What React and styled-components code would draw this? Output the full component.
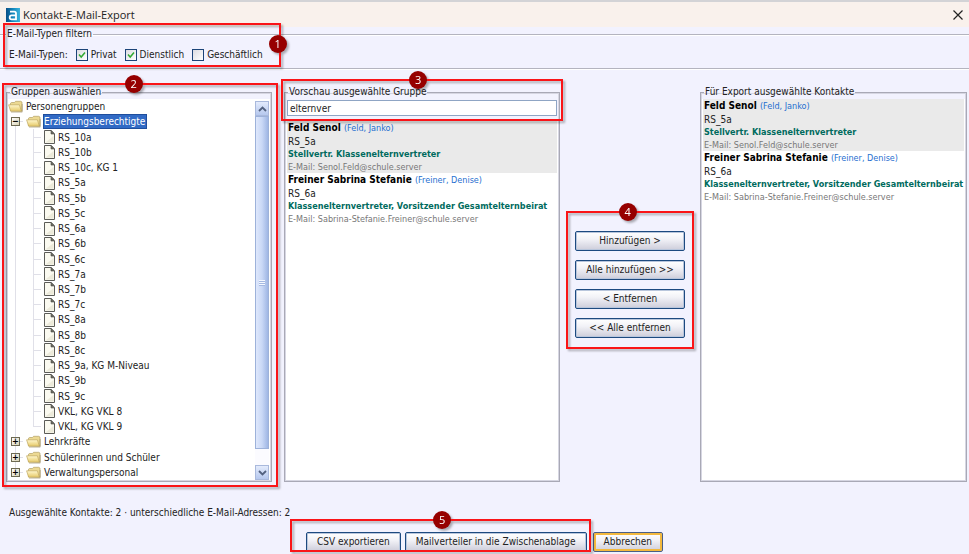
import React, { useState } from 'react';
import styled, { createGlobalStyle } from 'styled-components';

const CLASSES = [
  'RS_10a', 'RS_10b', 'RS_10c, KG 1', 'RS_5a', 'RS_5b', 'RS_5c', 'RS_6a', 'RS_6b', 'RS_6c', 'RS_7a',
  'RS_7b', 'RS_7c', 'RS_8a', 'RS_8b', 'RS_8c', 'RS_9a, KG M-Niveau', 'RS_9b', 'RS_9c', 'VKL, KG VKL 8', 'VKL, KG VKL 9',
];

const CLOSED_GROUPS = ['Lehrkräfte', 'Schülerinnen und Schüler', 'Verwaltungspersonal'];

const CONTACTS = [
  {
    name: 'Feld Senol',
    child: '(Feld, Janko)',
    group: 'RS_5a',
    role: 'Stellvertr. Klassenelternvertreter',
    mail: 'Senol.Feld@schule.server',
  },
  {
    name: 'Freiner Sabrina Stefanie',
    child: '(Freiner, Denise)',
    group: 'RS_6a',
    role: 'Klassenelternvertreter, Vorsitzender Gesamtelternbeirat',
    mail: 'Sabrina-Stefanie.Freiner@schule.server',
  },
];

function FolderIcon() {
  return (
    <svg width="15" height="13" viewBox="0 0 15 13" aria-hidden="true">
      <defs>
        <linearGradient id="folder" x1="0" y1="0" x2="0" y2="1">
          <stop offset="0" stopColor="#fff8cf" />
          <stop offset="1" stopColor="#e6c968" />
        </linearGradient>
      </defs>
      <path d="M2.500 10.500V3.200l1-.7h3l1-1.200h5.200l1.300.8v9z" fill="#ecd992" stroke="#b3a067" strokeWidth=".7" />
      <path d="M.6 4.800h10.800l2 6.400H2.600z" fill="url(#folder)" stroke="#bfa65c" strokeWidth=".7" strokeLinejoin="round" />
      <path d="M3 12.100h11.200V4" fill="none" stroke="#8a7a4c" strokeWidth=".7" opacity=".7" />
    </svg>
  );
}

function FileIcon() {
  return (
    <svg width="11" height="14" viewBox="0 0 11 14" aria-hidden="true">
      <path d="M.5.5h6.700l3.300 3.300v9.700H.5z" fill="#fbfaf0" stroke="#5c5c58" />
      <path d="M7 .6v3.400h3.400z" fill="#6b6b60" stroke="#4c4c48" strokeWidth=".6" />
      <path d="M1.400 12.400 9.600 6v6.400z" fill="#eceada" />
    </svg>
  );
}

function AppIcon() {
  return (
    <svg width="14" height="14" viewBox="0 0 14 14" aria-hidden="true">
      <defs>
        <linearGradient id="app" x1="0" x2="1">
          <stop offset="0" stopColor="#0b4f86" />
          <stop offset=".5" stopColor="#1488bd" />
          <stop offset="1" stopColor="#3cb4dc" />
        </linearGradient>
      </defs>
      <path d="M0 0h14v14H0z" fill="url(#app)" />
      <path d="M4 3.600h4.200q1.800 0 1.800 1.800v6H5.600q-1.900 0-1.900-2 0-2 1.900-2H10" fill="none" stroke="#fff" strokeWidth="1.800" />
    </svg>
  );
}

function Marker({ number, badgeX, badgeY = '0%', top, right, bottom, left }) {
  return (
    <MarkerFrame $top={top} $right={right} $bottom={bottom} $left={left}>
      <Badge $x={badgeX} $y={badgeY}>{number}</Badge>
    </MarkerFrame>
  );
}

function GroupTree() {
  return (
    <TreeArea>
      <Tree>
        <Row><FolderIcon /><Label>Personengruppen</Label></Row>
        <Row>
          <Slot $line="down" $stub><Toggle type="button" aria-label="Zuklappen">−</Toggle></Slot>
          <FolderIcon />
          <Label $selected>Erziehungsberechtigte</Label>
        </Row>
        {CLASSES.map((name, i) => (
          <Row key={name}>
            <Slot $line="full" />
            <Slot $line={i === CLASSES.length - 1 ? 'up' : 'full'} $stub />
            <FileIcon />
            <Label>{name}</Label>
          </Row>
        ))}
        {CLOSED_GROUPS.map((name, i) => (
          <Row key={name}>
            <Slot $line={i === CLOSED_GROUPS.length - 1 ? 'up' : 'full'} $stub>
              <Toggle type="button" aria-label="Aufklappen">+</Toggle>
            </Slot>
            <FolderIcon />
            <Label>{name}</Label>
          </Row>
        ))}
      </Tree>
      <ScrollBar>
        <ScrollButton type="button" aria-label="Nach oben">
          <svg width="9" height="6" viewBox="0 0 9 6"><path d="M1 5l3.500-3.500L8 5" fill="none" stroke="#52617f" strokeWidth="1.800" /></svg>
        </ScrollButton>
        <ScrollThumb><Grip /></ScrollThumb>
        <ScrollButton type="button" aria-label="Nach unten">
          <svg width="9" height="6" viewBox="0 0 9 6"><path d="M1 1l3.500 3.500L8 1" fill="none" stroke="#52617f" strokeWidth="1.800" /></svg>
        </ScrollButton>
      </ScrollBar>
    </TreeArea>
  );
}

function ContactList() {
  return (
    <Contacts>
      {CONTACTS.map((contact) => (
        <Contact key={contact.name}>
          <NameLine>{contact.name} <Child>{contact.child}</Child></NameLine>
          <GroupLine>{contact.group}</GroupLine>
          <RoleLine>{contact.role}</RoleLine>
          <MailLine>E-Mail: {contact.mail}</MailLine>
        </Contact>
      ))}
    </Contacts>
  );
}

export default function App() {
  const [types, setTypes] = useState({ Privat: true, Dienstlich: true, Geschäftlich: false });
  const [search, setSearch] = useState('elternver');

  return (
    <>
      <GlobalStyle />
      <Window>
        <TitleBar>
          <AppIcon />
          <Title>Kontakt-E-Mail-Export</Title>
          <CloseButton type="button" aria-label="Schließen">
            <svg width="10" height="10" viewBox="0 0 10 10"><path d="M.5.5l9 9M9.500.5l-9 9" stroke="#222" strokeWidth="1.200" /></svg>
          </CloseButton>
        </TitleBar>

        <FilterBox>
          <Legend>E-Mail-Typen filtern</Legend>
          <FilterRow>
            <FilterTitle>E-Mail-Typen:</FilterTitle>
            {Object.keys(types).map((type) => (
              <CheckLabel key={type}>
                <CheckBox
                  type="checkbox"
                  checked={types[type]}
                  onChange={() => setTypes({ ...types, [type]: !types[type] })}
                />
                {type}
              </CheckLabel>
            ))}
            <Marker number={1} badgeX="100%" badgeY="50%" top={-18} right={-16} bottom={1} left={-6} />
          </FilterRow>
        </FilterBox>

        <Columns>
          <Panel>
            <Legend>Gruppen auswählen</Legend>
            <GroupTree />
            <Marker number={2} badgeX="48%" top={-16} right={-7} bottom={-6} left={-5} />
          </Panel>

          <Panel>
            <Legend>Vorschau ausgewählte Gruppe</Legend>
            <SearchRow>
              <SearchInput
                aria-label="Vorschau durchsuchen"
                value={search}
                onChange={(e) => setSearch(e.target.value)}
              />
              <Marker number={3} badgeX="49%" top={-20} right={-5} bottom={0} left={-5} />
            </SearchRow>
            <ContactList />
          </Panel>

          <Transfer>
            <Button type="button">Hinzufügen &gt;</Button>
            <Button type="button">Alle hinzufügen &gt;&gt;</Button>
            <Button type="button">&lt; Entfernen</Button>
            <Button type="button">&lt;&lt; Alle entfernen</Button>
            <Marker number={4} badgeX="49%" top={-20} right={-6} bottom={-11} left={-6} />
          </Transfer>

          <Panel>
            <Legend>Für Export ausgewählte Kontakte</Legend>
            <ContactList />
          </Panel>
        </Columns>

        <Status>Ausgewählte Kontakte: 2 · unterschiedliche E-Mail-Adressen: 2</Status>

        <Footer>
          <ExportButtons>
            <Button type="button">CSV exportieren</Button>
            <Button type="button">Mailverteiler in die Zwischenablage</Button>
            <Marker number={5} badgeX="51%" top={-13} right={-4} bottom={0} left={-16} />
          </ExportButtons>
          <Button type="button" $focused>Abbrechen</Button>
        </Footer>
      </Window>
    </>
  );
}

const GlobalStyle = createGlobalStyle`
  * {
    box-sizing: border-box;
  }

  body {
    margin: 0;
    background-color: #f2f2fe;
  }

  button, input {
    font: inherit;
    color: inherit;
  }
`;

const Window = styled.main`
  display: flex;
  flex-direction: column;
  min-height: 100vh;
  border-top: 2px solid #d3d3d6;
  background-color: #f2f2fe;
  color: #222;
  font-family: 'DejaVu Sans Condensed', 'DejaVu Sans', sans-serif;
  font-size: 10px;
  line-height: 14px;
  white-space: nowrap;
`;

const TitleBar = styled.header`
  display: flex;
  align-items: center;
  gap: 3px;
  height: 25px;
  padding: 0 6px;
  background-color: #f9f1ec;
`;

const Title = styled.h1`
  flex: 1;
  margin: 0;
  font-family: 'Open Sans', 'Noto Sans', sans-serif;
  font-size: 11px;
  font-weight: 400;
`;

const CloseButton = styled.button`
  display: flex;
  padding: 0;
  border: 0;
  background: none;
`;

const Legend = styled.legend`
  padding: 0 1px;
  margin-left: 2px;
`;

const FilterBox = styled.fieldset`
  margin: 0;
  padding: 0 4px;
  border: solid #b4b4bf;
  border-width: 1px 0;
  box-shadow: inset 0 1px #fff, 0 1px #fff;
`;

const FilterRow = styled.div`
  position: relative;
  display: flex;
  align-items: center;
  gap: 6px;
  width: max-content;
  height: 27px;
  margin-left: 5px;
`;

const FilterTitle = styled.span`
  margin-right: 2px;
`;

const CheckLabel = styled.label`
  display: flex;
  align-items: center;
  gap: 3px;
  margin-right: 2px;
`;

const CheckBox = styled.input`
  appearance: none;
  width: 12px;
  height: 12px;
  margin: 0;
  border: 1px solid #1c4478;
  background: linear-gradient(135deg, #dcdce2, #fff);

  &:checked {
    background:
      url("data:image/svg+xml,%3Csvg xmlns='http://www.w3.org/2000/svg' viewBox='0 0 10 10'%3E%3Cpath d='M2 4.500l2.200 2.500L8 2.500' fill='none' stroke='%2332a932' stroke-width='1.500'/%3E%3C/svg%3E"),
      linear-gradient(135deg, #dcdce2, #fff);
  }
`;

const Columns = styled.div`
  flex: 1;
  display: grid;
  grid-template-columns: minmax(0, 266fr) minmax(0, 276fr) 116px minmax(0, 267fr);
  gap: 12px;
  padding: 16px 2px 0 6px;
`;

const Panel = styled.fieldset`
  position: relative;
  display: flex;
  flex-direction: column;
  min-width: 0;
  margin: 0;
  padding: 0 1px 1px;
  border: 1px solid #a9a9b6;
  box-shadow: inset 0 0 0 1px #d6d6e2;
`;

const TreeArea = styled.div`
  flex: 1;
  display: flex;
  background-color: #fff;
`;

const Tree = styled.ul`
  flex: 1;
  display: grid;
  grid-auto-rows: minmax(15px, 1fr);
  margin: 0;
  padding: 0;
  list-style: none;
`;

const Row = styled.li`
  display: flex;
  align-items: center;
`;

const lines = { full: '7px 0 / 1px 100%', down: '7px 100% / 1px 50%', up: '7px 0 / 1px 50%' };

const Slot = styled.span`
  display: flex;
  align-items: center;
  align-self: stretch;
  width: 18px;
  padding-left: 3px;
  background:
    linear-gradient(#e0e0e8, #e0e0e8) ${({ $line }) => lines[$line]} no-repeat,
    linear-gradient(#e0e0e8, #e0e0e8) 7px 50% / ${({ $stub }) => ($stub ? '8px 1px' : '0 0')} no-repeat;
`;

const Toggle = styled.button`
  display: flex;
  align-items: center;
  justify-content: center;
  width: 9px;
  height: 9px;
  padding: 0;
  border: 1px solid #6d6a52;
  background: linear-gradient(135deg, #fff, #d8d2b4);
  color: #000;
  font-size: 9px;
  font-weight: 700;
  line-height: 7px;
`;

const Label = styled.span`
  margin-left: 2px;
  padding: 0 1px 0 0;
  border: 1px solid transparent;
  line-height: 13px;
  ${({ $selected }) => $selected && 'border-color: #1f4e9c; background-color: #316ac5; color: #fff;'}
`;

const ScrollBar = styled.div`
  display: flex;
  flex-direction: column;
  width: 14px;
  margin: 2px 1px 0 0;
  background-color: #fbfbff;
`;

const ScrollButton = styled.button`
  display: flex;
  align-items: center;
  justify-content: center;
  height: 15px;
  padding: 0;
  border: 1px solid #a9b9dc;
  background: linear-gradient(#e3ebfc, #b6c8ee);
`;

const ScrollThumb = styled.div`
  flex: 1;
  display: flex;
  align-items: center;
  justify-content: center;
  margin-bottom: 16px;
  border: 1px solid #9db2da;
  background: linear-gradient(90deg, #dfe8fc, #c9d8f6 50%, #9fb6e4);
`;

const Grip = styled.div`
  width: 6px;
  height: 6px;
  background: repeating-linear-gradient(#f4f8ff 0 1px, #a5b9e2 1px 2px);
`;

const SearchRow = styled.div`
  position: relative;
  padding: 1px 1px 5px;
`;

const SearchInput = styled.input`
  display: block;
  width: 100%;
  height: 16px;
  padding: 0 2px;
  border: 1px solid #8fa5c4;
  background-color: #fff;
`;

const Contacts = styled.ul`
  flex: 1;
  margin: 0;
  padding: 0 1px;
  background-color: #fff;
  list-style: none;
`;

const Contact = styled.li`
  padding: 0 1px;

  &:nth-child(odd) {
    background-color: #eaeaea;
  }
`;

const NameLine = styled.div`
  color: #000;
  font-weight: 700;
`;

const Child = styled.span`
  color: #1f6fd0;
  font-size: 9px;
  font-weight: 400;
`;

const GroupLine = styled.div`
  line-height: 13px;
`;

const RoleLine = styled.div`
  color: #006b5e;
  font-size: 9px;
  font-weight: 700;
  line-height: 13px;
`;

const MailLine = styled.div`
  color: #777;
  font-size: 9px;
  line-height: 12px;
`;

const Transfer = styled.div`
  position: relative;
  display: flex;
  flex-direction: column;
  align-self: start;
  gap: 9px;
  margin-top: 146px;
  padding: 0 3px;
`;

const Button = styled.button`
  height: 20px;
  padding: 0 10px;
  border: 1px solid ${({ $focused }) => ($focused ? '#4a5f86' : '#1d4a80')};
  border-radius: 2px;
  background: linear-gradient(#fff, #f2f2f7 40%, #cdcdda);
  box-shadow: inset 0 0 0 ${({ $focused }) => ($focused ? '2px #f3b93e' : '1px #b9c6dc')};
`;

const Status = styled.p`
  margin: 24px 9px 12px;
`;

const Footer = styled.footer`
  display: flex;
  justify-content: center;
  gap: 6px;
  padding-bottom: 2px;
`;

const ExportButtons = styled.div`
  position: relative;
  display: flex;
  gap: 4px;
`;

const MarkerFrame = styled.div`
  position: absolute;
  top: ${({ $top }) => $top}px;
  right: ${({ $right }) => $right}px;
  bottom: ${({ $bottom }) => $bottom}px;
  left: ${({ $left }) => $left}px;
  border: 2px solid #fa1418;
  filter: drop-shadow(2px 2px 1px rgba(0, 0, 0, 0.3));
  pointer-events: none;
`;

const Badge = styled.span`
  position: absolute;
  top: ${({ $y }) => $y};
  left: ${({ $x }) => $x};
  width: 18px;
  height: 18px;
  margin: -10px;
  border-radius: 50%;
  background-color: #960000;
  color: #fff;
  font-family: 'Open Sans', sans-serif;
  font-size: 11px;
  line-height: 18px;
  text-align: center;
`;
